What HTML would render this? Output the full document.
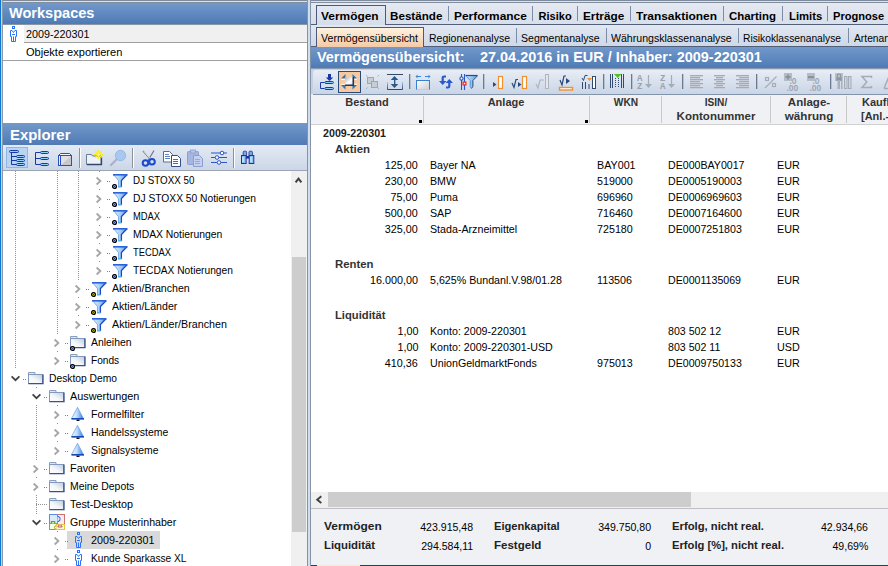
<!DOCTYPE html><html><head><meta charset="utf-8"><style>
body{margin:0;width:888px;height:566px;overflow:hidden;position:relative;background:#f0f0f0;font-family:"Liberation Sans",sans-serif}
.a{position:absolute}
.t{position:absolute;white-space:nowrap;line-height:1;transform-origin:0 0}
</style></head><body>
<div class="a" style="left:0px;top:0px;width:888px;height:1px;background:#7d8b9d"></div>
<div class="a" style="left:0px;top:1px;width:888px;height:1px;background:#dbe3ee"></div>
<div class="a" style="left:0px;top:2px;width:888px;height:1px;background:#818d9d"></div>
<div class="a" style="left:0px;top:0px;width:1px;height:566px;background:#0f78d6"></div>
<div class="a" style="left:1px;top:0px;width:1px;height:566px;background:#c9d2de"></div>
<div class="a" style="left:2px;top:0px;width:1px;height:566px;background:#8a98a8"></div>
<div class="a" style="left:3px;top:3px;width:304px;height:21px;background:linear-gradient(#7399cb,#4e7ab5)"></div>
<div class="a" style="left:3px;top:24px;width:304px;height:1px;background:#8a96a4"></div>
<div class="t" style="left:9px;top:5px;font-size:15px;font-weight:bold;color:#fff;transform:scaleX(0.970);">Workspaces</div>
<div class="a" style="left:3px;top:25px;width:304px;height:97px;background:#fff"></div>
<div class="a" style="left:24px;top:25px;width:283px;height:17px;background:#f0f0f0"></div>
<div class="a" style="left:24px;top:42px;width:283px;height:1px;background:#a0a0a0"></div>
<div class="a" style="left:3px;top:60px;width:304px;height:1px;background:#a0a0a0"></div>
<div class="t" style="left:26px;top:29px;font-size:11px;font-weight:normal;color:#000;transform:scaleX(0.979);">2009-220301</div>
<div class="t" style="left:26px;top:47px;font-size:11px;font-weight:normal;color:#000;transform:scaleX(1.003);">Objekte exportieren</div>
<svg class="a" style="left:10px;top:26px;" width="8" height="16" viewBox="0 0 8 16"><g fill="none" stroke="#2a72f8" stroke-width="1"><rect x="2.5" y="0.5" width="2" height="2"/><path d="M0.5 4.5H2L3.5 6.5L5 4.5H6.5V10.5H5.5V15.5H1.5V10.5H0.5Z"/><path d="M3.5 10.5V15.5M2 8.5H5"/></g></svg>
<div class="a" style="left:3px;top:122px;width:304px;height:1px;background:#fff"></div>
<div class="a" style="left:3px;top:123px;width:304px;height:22px;background:linear-gradient(#7399cb,#4e7ab5)"></div>
<div class="t" style="left:9.5px;top:127px;font-size:15px;font-weight:bold;color:#fff;transform:scaleX(0.993);">Explorer</div>
<div class="a" style="left:3px;top:145px;width:304px;height:25px;background:linear-gradient(#e3eaf4,#ccd6e6)"></div>
<div class="a" style="left:3px;top:170px;width:304px;height:1px;background:#9aa6b6"></div>
<div class="a" style="left:6px;top:147px;width:22px;height:21px;background:#b9d3f3;border:1px solid #8db6ea;box-sizing:border-box"></div>
<svg class="a" style="left:0;top:0" width="888" height="566"><path d="M11.5 152v12.5M11.5 156.5h5M11.5 160.5h5M11.5 164.5h5" stroke="#1838a8" stroke-width="1" fill="none"/><rect x="9.5" y="150.5" width="9" height="2" rx="1" fill="#8cd0fa" stroke="#1838a8" stroke-width="1"/><rect x="16.5" y="155.5" width="8" height="2" rx="1" fill="#8cd0fa" stroke="#1838a8" stroke-width="1"/><rect x="16.5" y="159.5" width="8" height="2" rx="1" fill="#8cd0fa" stroke="#1838a8" stroke-width="1"/><rect x="16.5" y="163.5" width="8" height="2" rx="1" fill="#8cd0fa" stroke="#1838a8" stroke-width="1"/><path d="M35.5 152.5v12M35.5 152.5h5M35.5 158.5h5M35.5 164.5h5" stroke="#1838a8" stroke-width="1" fill="none"/><rect x="40.5" y="151.5" width="8" height="2" rx="1" fill="#8cd0fa" stroke="#1838a8" stroke-width="1"/><rect x="40.5" y="157.5" width="8" height="2" rx="1" fill="#8cd0fa" stroke="#1838a8" stroke-width="1"/><rect x="40.5" y="163.5" width="8" height="2" rx="1" fill="#8cd0fa" stroke="#1838a8" stroke-width="1"/><path d="M58.5 155.5l2-2h9l2 2" fill="#f4f6fa" stroke="#2850c0"/><rect x="58.5" y="155.5" width="2" height="10" fill="#e8eef8" stroke="#2850c0"/><rect x="60.5" y="155.5" width="11" height="10" fill="#e0e0e4" stroke="#2850c0"/><path d="M61 165L71 156V165z" fill="#c8c8cc"/><rect x="79" y="148" width="1" height="20" fill="#8e9298"/><rect x="80" y="148" width="1" height="20" fill="#ffffff"/><rect x="132" y="148" width="1" height="20" fill="#8e9298"/><rect x="133" y="148" width="1" height="20" fill="#ffffff"/><rect x="233" y="148" width="1" height="20" fill="#8e9298"/><rect x="234" y="148" width="1" height="20" fill="#ffffff"/><path d="M86.5 154.5h5l1 1.5h8.5v8.5h-14.5z" fill="#eef2f8" stroke="#6a7c98"/><path d="M87 164.5h14.5V157" fill="none" stroke="#34486a" stroke-width="1.3"/><path d="M98.5 150v9M94 154.5h9M95.3 151.3l6.4 6.4M101.7 151.3l-6.4 6.4" stroke="#f4ec20" stroke-width="1.2"/><path d="M98.5 152.5v4M96.5 154.5h4" stroke="#f8f080" stroke-width="1"/><path d="M117 159l-6 6" stroke="#a8b2c4" stroke-width="2.2" stroke-linecap="round"/><circle cx="120.5" cy="155.5" r="5.2" fill="#a8c8f0" stroke="#98b8e8" stroke-width="1"/><path d="M143 151l8 9M154 150.5l-6 10" stroke="#707888" stroke-width="1.2" fill="none"/><path d="M144 151.5l7 8" stroke="#ffffff" stroke-width="0.8"/><circle cx="145.5" cy="163" r="2.8" fill="none" stroke="#1a4ad0" stroke-width="2"/><circle cx="152" cy="161.8" r="2.8" fill="none" stroke="#1a4ad0" stroke-width="2"/><path d="M163.5 151.5h6l3 3v7.5h-9z" fill="#fff" stroke="#5a6a88"/><path d="M165 154.5h4M165 156.5h5M165 158.5h5" stroke="#6080c0"/><path d="M171.5 155.5h6l3 3v8h-9z" fill="#fff" stroke="#34508a"/><path d="M173 159.5h5M173 161.5h5M173 163.5h5" stroke="#3a70d0"/><rect x="187.5" y="151.5" width="11" height="13" rx="1" fill="#a6b6e0" stroke="#8c9ed0"/><rect x="190.5" y="150" width="5" height="3" fill="#b8c6ea" stroke="#8c9ed0" stroke-width="0.8"/><path d="M193.5 155.5h6l3 3v8h-9z" fill="#c4d0ee" stroke="#8c9ed0"/><path d="M195 159.5h5M195 161.5h5M195 163.5h5" stroke="#98a8d8"/><path d="M211 153h16M211 157.5h16M211 162.5h16" stroke="#2a56c8" stroke-width="1.2"/><circle cx="222" cy="153" r="1.8" fill="#fff" stroke="#2a56c8"/><circle cx="217" cy="157.5" r="1.8" fill="#fff" stroke="#2a56c8"/><circle cx="219" cy="162.5" r="1.8" fill="#fff" stroke="#2a56c8"/><rect x="243.2" y="151.2" width="3.4" height="5" rx="1" fill="#78aee0" stroke="#2a3aa0" stroke-width="0.9"/><rect x="249" y="151.2" width="3.4" height="5" rx="1" fill="#78aee0" stroke="#2a3aa0" stroke-width="0.9"/><rect x="241.5" y="155.5" width="4.6" height="8" fill="#8cc4f0" stroke="#2030a0" stroke-width="1"/><rect x="249.2" y="155.5" width="4.6" height="8" fill="#8cc4f0" stroke="#2030a0" stroke-width="1"/><rect x="246" y="156" width="3.2" height="2.6" fill="#2030a0"/><path d="M243 157v5M251 157v5" stroke="#e8f6ff" stroke-width="1"/></svg>
<div class="a" style="left:3px;top:171px;width:288px;height:395px;background:#fff"></div>
<div class="a" style="left:291px;top:171px;width:16px;height:395px;background:#f0f0f0"></div>
<div class="a" style="left:292px;top:257px;width:14px;height:275px;background:#cdcdcd"></div>
<svg class="a" style="left:294px;top:176px;" width="9" height="8" viewBox="0 0 9 8"><path d="M1.6 6.3L4.5 2.6L7.4 6.3" fill="none" stroke="#404040" stroke-width="2"/></svg>
<div class="a" style="left:15px;top:171px;width:1px;height:198px;background:repeating-linear-gradient(#909090 0 1px,transparent 1px 2px)"></div>
<div class="a" style="left:57px;top:171px;width:1px;height:187px;background:repeating-linear-gradient(#909090 0 1px,transparent 1px 2px)"></div>
<div class="a" style="left:78px;top:171px;width:1px;height:151px;background:repeating-linear-gradient(#909090 0 1px,transparent 1px 2px)"></div>
<div class="a" style="left:99px;top:171px;width:1px;height:97px;background:repeating-linear-gradient(#909090 0 1px,transparent 1px 2px)"></div>
<div class="a" style="left:36px;top:387px;width:1px;height:133px;background:repeating-linear-gradient(#909090 0 1px,transparent 1px 2px)"></div>
<div class="a" style="left:57px;top:405px;width:1px;height:43px;background:repeating-linear-gradient(#909090 0 1px,transparent 1px 2px)"></div>
<div class="a" style="left:57px;top:531px;width:1px;height:35px;background:repeating-linear-gradient(#909090 0 1px,transparent 1px 2px)"></div>
<div class="a" style="left:95px;top:173px;width:9px;height:15px;background:#fff"></div>
<svg class="a" style="left:95px;top:176px;" width="8" height="10" viewBox="0 0 8 10"><path d="M1.6 1.5L5.4 5L1.6 8.5" fill="none" stroke="#a6a6a6" stroke-width="1.8"/></svg>
<div class="a" style="left:107px;top:181px;width:1px;height:1px;background:#808080"></div>
<div class="a" style="left:109px;top:181px;width:1px;height:1px;background:#808080"></div>
<svg class="a" style="left:113px;top:174px;" width="15" height="14" viewBox="0 0 15 14"><defs><linearGradient id="fg" x1="0" x2="1"><stop offset="0" stop-color="#e4f0fc"/><stop offset="0.5" stop-color="#a8d0f8"/><stop offset="1" stop-color="#4e90e8"/></linearGradient></defs><path d="M0.5 0.5H14L9 6.5V13H5V6.5z" fill="url(#fg)"/><path d="M0.5 0.5L5.5 6.5V13" fill="none" stroke="#80aee8" stroke-width="1"/><path d="M14 0.8L8.4 6.5V13" fill="none" stroke="#1a4cc8" stroke-width="1.3"/><rect x="0" y="0" width="14.5" height="1.6" fill="#2a62d8"/><rect x="5" y="12" width="3.5" height="1.5" fill="#5ab0e8"/></svg>
<svg class="a" style="left:112px;top:184px;" width="6" height="6" viewBox="0 0 6 6"><circle cx="2.5" cy="2.5" r="1.9" fill="#f4e800" stroke="#000" stroke-width="1.3"/><rect x="2" y="2" width="1" height="1" fill="#2040a0"/></svg>
<div class="t" style="left:133px;top:175px;font-size:11px;font-weight:normal;color:#000;transform:scaleX(0.891);">DJ STOXX 50</div>
<div class="a" style="left:95px;top:191px;width:9px;height:15px;background:#fff"></div>
<svg class="a" style="left:95px;top:194px;" width="8" height="10" viewBox="0 0 8 10"><path d="M1.6 1.5L5.4 5L1.6 8.5" fill="none" stroke="#a6a6a6" stroke-width="1.8"/></svg>
<div class="a" style="left:107px;top:199px;width:1px;height:1px;background:#808080"></div>
<div class="a" style="left:109px;top:199px;width:1px;height:1px;background:#808080"></div>
<svg class="a" style="left:113px;top:192px;" width="15" height="14" viewBox="0 0 15 14"><defs><linearGradient id="fg" x1="0" x2="1"><stop offset="0" stop-color="#e4f0fc"/><stop offset="0.5" stop-color="#a8d0f8"/><stop offset="1" stop-color="#4e90e8"/></linearGradient></defs><path d="M0.5 0.5H14L9 6.5V13H5V6.5z" fill="url(#fg)"/><path d="M0.5 0.5L5.5 6.5V13" fill="none" stroke="#80aee8" stroke-width="1"/><path d="M14 0.8L8.4 6.5V13" fill="none" stroke="#1a4cc8" stroke-width="1.3"/><rect x="0" y="0" width="14.5" height="1.6" fill="#2a62d8"/><rect x="5" y="12" width="3.5" height="1.5" fill="#5ab0e8"/></svg>
<svg class="a" style="left:112px;top:202px;" width="6" height="6" viewBox="0 0 6 6"><circle cx="2.5" cy="2.5" r="1.9" fill="#f4e800" stroke="#000" stroke-width="1.3"/><rect x="2" y="2" width="1" height="1" fill="#2040a0"/></svg>
<div class="t" style="left:133px;top:193px;font-size:11px;font-weight:normal;color:#000;transform:scaleX(0.933);">DJ STOXX 50 Notierungen</div>
<div class="a" style="left:95px;top:209px;width:9px;height:15px;background:#fff"></div>
<svg class="a" style="left:95px;top:212px;" width="8" height="10" viewBox="0 0 8 10"><path d="M1.6 1.5L5.4 5L1.6 8.5" fill="none" stroke="#a6a6a6" stroke-width="1.8"/></svg>
<div class="a" style="left:107px;top:217px;width:1px;height:1px;background:#808080"></div>
<div class="a" style="left:109px;top:217px;width:1px;height:1px;background:#808080"></div>
<svg class="a" style="left:113px;top:210px;" width="15" height="14" viewBox="0 0 15 14"><defs><linearGradient id="fg" x1="0" x2="1"><stop offset="0" stop-color="#e4f0fc"/><stop offset="0.5" stop-color="#a8d0f8"/><stop offset="1" stop-color="#4e90e8"/></linearGradient></defs><path d="M0.5 0.5H14L9 6.5V13H5V6.5z" fill="url(#fg)"/><path d="M0.5 0.5L5.5 6.5V13" fill="none" stroke="#80aee8" stroke-width="1"/><path d="M14 0.8L8.4 6.5V13" fill="none" stroke="#1a4cc8" stroke-width="1.3"/><rect x="0" y="0" width="14.5" height="1.6" fill="#2a62d8"/><rect x="5" y="12" width="3.5" height="1.5" fill="#5ab0e8"/></svg>
<svg class="a" style="left:112px;top:220px;" width="6" height="6" viewBox="0 0 6 6"><circle cx="2.5" cy="2.5" r="1.9" fill="#f4e800" stroke="#000" stroke-width="1.3"/><rect x="2" y="2" width="1" height="1" fill="#2040a0"/></svg>
<div class="t" style="left:133px;top:211px;font-size:11px;font-weight:normal;color:#000;transform:scaleX(0.853);">MDAX</div>
<div class="a" style="left:95px;top:227px;width:9px;height:15px;background:#fff"></div>
<svg class="a" style="left:95px;top:230px;" width="8" height="10" viewBox="0 0 8 10"><path d="M1.6 1.5L5.4 5L1.6 8.5" fill="none" stroke="#a6a6a6" stroke-width="1.8"/></svg>
<div class="a" style="left:107px;top:235px;width:1px;height:1px;background:#808080"></div>
<div class="a" style="left:109px;top:235px;width:1px;height:1px;background:#808080"></div>
<svg class="a" style="left:113px;top:228px;" width="15" height="14" viewBox="0 0 15 14"><defs><linearGradient id="fg" x1="0" x2="1"><stop offset="0" stop-color="#e4f0fc"/><stop offset="0.5" stop-color="#a8d0f8"/><stop offset="1" stop-color="#4e90e8"/></linearGradient></defs><path d="M0.5 0.5H14L9 6.5V13H5V6.5z" fill="url(#fg)"/><path d="M0.5 0.5L5.5 6.5V13" fill="none" stroke="#80aee8" stroke-width="1"/><path d="M14 0.8L8.4 6.5V13" fill="none" stroke="#1a4cc8" stroke-width="1.3"/><rect x="0" y="0" width="14.5" height="1.6" fill="#2a62d8"/><rect x="5" y="12" width="3.5" height="1.5" fill="#5ab0e8"/></svg>
<svg class="a" style="left:112px;top:238px;" width="6" height="6" viewBox="0 0 6 6"><circle cx="2.5" cy="2.5" r="1.9" fill="#f4e800" stroke="#000" stroke-width="1.3"/><rect x="2" y="2" width="1" height="1" fill="#2040a0"/></svg>
<div class="t" style="left:133px;top:229px;font-size:11px;font-weight:normal;color:#000;transform:scaleX(0.943);">MDAX Notierungen</div>
<div class="a" style="left:95px;top:245px;width:9px;height:15px;background:#fff"></div>
<svg class="a" style="left:95px;top:248px;" width="8" height="10" viewBox="0 0 8 10"><path d="M1.6 1.5L5.4 5L1.6 8.5" fill="none" stroke="#a6a6a6" stroke-width="1.8"/></svg>
<div class="a" style="left:107px;top:253px;width:1px;height:1px;background:#808080"></div>
<div class="a" style="left:109px;top:253px;width:1px;height:1px;background:#808080"></div>
<svg class="a" style="left:113px;top:246px;" width="15" height="14" viewBox="0 0 15 14"><defs><linearGradient id="fg" x1="0" x2="1"><stop offset="0" stop-color="#e4f0fc"/><stop offset="0.5" stop-color="#a8d0f8"/><stop offset="1" stop-color="#4e90e8"/></linearGradient></defs><path d="M0.5 0.5H14L9 6.5V13H5V6.5z" fill="url(#fg)"/><path d="M0.5 0.5L5.5 6.5V13" fill="none" stroke="#80aee8" stroke-width="1"/><path d="M14 0.8L8.4 6.5V13" fill="none" stroke="#1a4cc8" stroke-width="1.3"/><rect x="0" y="0" width="14.5" height="1.6" fill="#2a62d8"/><rect x="5" y="12" width="3.5" height="1.5" fill="#5ab0e8"/></svg>
<svg class="a" style="left:112px;top:256px;" width="6" height="6" viewBox="0 0 6 6"><circle cx="2.5" cy="2.5" r="1.9" fill="#f4e800" stroke="#000" stroke-width="1.3"/><rect x="2" y="2" width="1" height="1" fill="#2040a0"/></svg>
<div class="t" style="left:133px;top:247px;font-size:11px;font-weight:normal;color:#000;transform:scaleX(0.854);">TECDAX</div>
<div class="a" style="left:95px;top:263px;width:9px;height:15px;background:#fff"></div>
<svg class="a" style="left:95px;top:266px;" width="8" height="10" viewBox="0 0 8 10"><path d="M1.6 1.5L5.4 5L1.6 8.5" fill="none" stroke="#a6a6a6" stroke-width="1.8"/></svg>
<div class="a" style="left:107px;top:271px;width:1px;height:1px;background:#808080"></div>
<div class="a" style="left:109px;top:271px;width:1px;height:1px;background:#808080"></div>
<svg class="a" style="left:113px;top:264px;" width="15" height="14" viewBox="0 0 15 14"><defs><linearGradient id="fg" x1="0" x2="1"><stop offset="0" stop-color="#e4f0fc"/><stop offset="0.5" stop-color="#a8d0f8"/><stop offset="1" stop-color="#4e90e8"/></linearGradient></defs><path d="M0.5 0.5H14L9 6.5V13H5V6.5z" fill="url(#fg)"/><path d="M0.5 0.5L5.5 6.5V13" fill="none" stroke="#80aee8" stroke-width="1"/><path d="M14 0.8L8.4 6.5V13" fill="none" stroke="#1a4cc8" stroke-width="1.3"/><rect x="0" y="0" width="14.5" height="1.6" fill="#2a62d8"/><rect x="5" y="12" width="3.5" height="1.5" fill="#5ab0e8"/></svg>
<svg class="a" style="left:112px;top:274px;" width="6" height="6" viewBox="0 0 6 6"><circle cx="2.5" cy="2.5" r="1.9" fill="#f4e800" stroke="#000" stroke-width="1.3"/><rect x="2" y="2" width="1" height="1" fill="#2040a0"/></svg>
<div class="t" style="left:133px;top:265px;font-size:11px;font-weight:normal;color:#000;transform:scaleX(0.928);">TECDAX Notierungen</div>
<div class="a" style="left:74px;top:281px;width:9px;height:15px;background:#fff"></div>
<svg class="a" style="left:74px;top:284px;" width="8" height="10" viewBox="0 0 8 10"><path d="M1.6 1.5L5.4 5L1.6 8.5" fill="none" stroke="#a6a6a6" stroke-width="1.8"/></svg>
<div class="a" style="left:86px;top:289px;width:1px;height:1px;background:#808080"></div>
<div class="a" style="left:88px;top:289px;width:1px;height:1px;background:#808080"></div>
<svg class="a" style="left:92px;top:282px;" width="15" height="14" viewBox="0 0 15 14"><defs><linearGradient id="fg" x1="0" x2="1"><stop offset="0" stop-color="#e4f0fc"/><stop offset="0.5" stop-color="#a8d0f8"/><stop offset="1" stop-color="#4e90e8"/></linearGradient></defs><path d="M0.5 0.5H14L9 6.5V13H5V6.5z" fill="url(#fg)"/><path d="M0.5 0.5L5.5 6.5V13" fill="none" stroke="#80aee8" stroke-width="1"/><path d="M14 0.8L8.4 6.5V13" fill="none" stroke="#1a4cc8" stroke-width="1.3"/><rect x="0" y="0" width="14.5" height="1.6" fill="#2a62d8"/><rect x="5" y="12" width="3.5" height="1.5" fill="#5ab0e8"/></svg>
<svg class="a" style="left:91px;top:292px;" width="6" height="6" viewBox="0 0 6 6"><circle cx="2.5" cy="2.5" r="1.9" fill="#f4e800" stroke="#000" stroke-width="1.3"/><rect x="2" y="2" width="1" height="1" fill="#2040a0"/></svg>
<div class="t" style="left:112px;top:283px;font-size:11px;font-weight:normal;color:#000;transform:scaleX(0.963);">Aktien/Branchen</div>
<div class="a" style="left:74px;top:299px;width:9px;height:15px;background:#fff"></div>
<svg class="a" style="left:74px;top:302px;" width="8" height="10" viewBox="0 0 8 10"><path d="M1.6 1.5L5.4 5L1.6 8.5" fill="none" stroke="#a6a6a6" stroke-width="1.8"/></svg>
<div class="a" style="left:86px;top:307px;width:1px;height:1px;background:#808080"></div>
<div class="a" style="left:88px;top:307px;width:1px;height:1px;background:#808080"></div>
<svg class="a" style="left:92px;top:300px;" width="15" height="14" viewBox="0 0 15 14"><defs><linearGradient id="fg" x1="0" x2="1"><stop offset="0" stop-color="#e4f0fc"/><stop offset="0.5" stop-color="#a8d0f8"/><stop offset="1" stop-color="#4e90e8"/></linearGradient></defs><path d="M0.5 0.5H14L9 6.5V13H5V6.5z" fill="url(#fg)"/><path d="M0.5 0.5L5.5 6.5V13" fill="none" stroke="#80aee8" stroke-width="1"/><path d="M14 0.8L8.4 6.5V13" fill="none" stroke="#1a4cc8" stroke-width="1.3"/><rect x="0" y="0" width="14.5" height="1.6" fill="#2a62d8"/><rect x="5" y="12" width="3.5" height="1.5" fill="#5ab0e8"/></svg>
<svg class="a" style="left:91px;top:310px;" width="6" height="6" viewBox="0 0 6 6"><circle cx="2.5" cy="2.5" r="1.9" fill="#f4e800" stroke="#000" stroke-width="1.3"/><rect x="2" y="2" width="1" height="1" fill="#2040a0"/></svg>
<div class="t" style="left:112px;top:301px;font-size:11px;font-weight:normal;color:#000;transform:scaleX(0.962);">Aktien/Länder</div>
<div class="a" style="left:74px;top:317px;width:9px;height:15px;background:#fff"></div>
<svg class="a" style="left:74px;top:320px;" width="8" height="10" viewBox="0 0 8 10"><path d="M1.6 1.5L5.4 5L1.6 8.5" fill="none" stroke="#a6a6a6" stroke-width="1.8"/></svg>
<div class="a" style="left:86px;top:325px;width:1px;height:1px;background:#808080"></div>
<div class="a" style="left:88px;top:325px;width:1px;height:1px;background:#808080"></div>
<svg class="a" style="left:92px;top:318px;" width="15" height="14" viewBox="0 0 15 14"><defs><linearGradient id="fg" x1="0" x2="1"><stop offset="0" stop-color="#e4f0fc"/><stop offset="0.5" stop-color="#a8d0f8"/><stop offset="1" stop-color="#4e90e8"/></linearGradient></defs><path d="M0.5 0.5H14L9 6.5V13H5V6.5z" fill="url(#fg)"/><path d="M0.5 0.5L5.5 6.5V13" fill="none" stroke="#80aee8" stroke-width="1"/><path d="M14 0.8L8.4 6.5V13" fill="none" stroke="#1a4cc8" stroke-width="1.3"/><rect x="0" y="0" width="14.5" height="1.6" fill="#2a62d8"/><rect x="5" y="12" width="3.5" height="1.5" fill="#5ab0e8"/></svg>
<svg class="a" style="left:91px;top:328px;" width="6" height="6" viewBox="0 0 6 6"><circle cx="2.5" cy="2.5" r="1.9" fill="#f4e800" stroke="#000" stroke-width="1.3"/><rect x="2" y="2" width="1" height="1" fill="#2040a0"/></svg>
<div class="t" style="left:112px;top:319px;font-size:11px;font-weight:normal;color:#000;transform:scaleX(0.973);">Aktien/Länder/Branchen</div>
<div class="a" style="left:53px;top:335px;width:9px;height:15px;background:#fff"></div>
<svg class="a" style="left:53px;top:338px;" width="8" height="10" viewBox="0 0 8 10"><path d="M1.6 1.5L5.4 5L1.6 8.5" fill="none" stroke="#a6a6a6" stroke-width="1.8"/></svg>
<div class="a" style="left:65px;top:343px;width:1px;height:1px;background:#808080"></div>
<div class="a" style="left:67px;top:343px;width:1px;height:1px;background:#808080"></div>
<svg class="a" style="left:70px;top:336px;" width="16" height="13" viewBox="0 0 16 13"><defs><linearGradient id="fo" x1="0" y1="1" x2="1" y2="0"><stop offset="0" stop-color="#ffffff"/><stop offset="0.45" stop-color="#f4f6fa"/><stop offset="1" stop-color="#bccadc"/></linearGradient></defs><path d="M0.5 2.5V0.5H7V2" fill="#dfe6f0" stroke="#8aa0c0"/><rect x="0.5" y="2.5" width="14" height="9" fill="url(#fo)" stroke="#8298bc"/><path d="M0.5 11.6H15V2.5" fill="none" stroke="#3a5286" stroke-width="1.3"/></svg>
<svg class="a" style="left:70px;top:346px;" width="6" height="6" viewBox="0 0 6 6"><circle cx="2.5" cy="2.5" r="1.9" fill="#f4e800" stroke="#000" stroke-width="1.3"/><rect x="2" y="2" width="1" height="1" fill="#2040a0"/></svg>
<div class="t" style="left:91px;top:337px;font-size:11px;font-weight:normal;color:#000;transform:scaleX(0.946);">Anleihen</div>
<div class="a" style="left:53px;top:353px;width:9px;height:15px;background:#fff"></div>
<svg class="a" style="left:53px;top:356px;" width="8" height="10" viewBox="0 0 8 10"><path d="M1.6 1.5L5.4 5L1.6 8.5" fill="none" stroke="#a6a6a6" stroke-width="1.8"/></svg>
<div class="a" style="left:65px;top:361px;width:1px;height:1px;background:#808080"></div>
<div class="a" style="left:67px;top:361px;width:1px;height:1px;background:#808080"></div>
<svg class="a" style="left:70px;top:354px;" width="16" height="13" viewBox="0 0 16 13"><defs><linearGradient id="fo" x1="0" y1="1" x2="1" y2="0"><stop offset="0" stop-color="#ffffff"/><stop offset="0.45" stop-color="#f4f6fa"/><stop offset="1" stop-color="#bccadc"/></linearGradient></defs><path d="M0.5 2.5V0.5H7V2" fill="#dfe6f0" stroke="#8aa0c0"/><rect x="0.5" y="2.5" width="14" height="9" fill="url(#fo)" stroke="#8298bc"/><path d="M0.5 11.6H15V2.5" fill="none" stroke="#3a5286" stroke-width="1.3"/></svg>
<svg class="a" style="left:70px;top:364px;" width="6" height="6" viewBox="0 0 6 6"><circle cx="2.5" cy="2.5" r="1.9" fill="#f4e800" stroke="#000" stroke-width="1.3"/><rect x="2" y="2" width="1" height="1" fill="#2040a0"/></svg>
<div class="t" style="left:91px;top:355px;font-size:11px;font-weight:normal;color:#000;transform:scaleX(0.922);">Fonds</div>
<div class="a" style="left:10px;top:371px;width:11px;height:15px;background:#fff"></div>
<svg class="a" style="left:10px;top:375px;" width="11" height="8" viewBox="0 0 11 8"><path d="M1.6 1.4L5.5 5.2L9.4 1.4" fill="none" stroke="#404040" stroke-width="1.7"/></svg>
<div class="a" style="left:23px;top:379px;width:1px;height:1px;background:#808080"></div>
<div class="a" style="left:25px;top:379px;width:1px;height:1px;background:#808080"></div>
<svg class="a" style="left:28px;top:372px;" width="16" height="13" viewBox="0 0 16 13"><defs><linearGradient id="fo" x1="0" y1="1" x2="1" y2="0"><stop offset="0" stop-color="#ffffff"/><stop offset="0.45" stop-color="#f4f6fa"/><stop offset="1" stop-color="#bccadc"/></linearGradient></defs><path d="M0.5 2.5V0.5H7V2" fill="#dfe6f0" stroke="#8aa0c0"/><rect x="0.5" y="2.5" width="14" height="9" fill="url(#fo)" stroke="#8298bc"/><path d="M0.5 11.6H15V2.5" fill="none" stroke="#3a5286" stroke-width="1.3"/></svg>
<div class="t" style="left:49px;top:373px;font-size:11px;font-weight:normal;color:#000;transform:scaleX(0.935);">Desktop Demo</div>
<div class="a" style="left:31px;top:389px;width:11px;height:15px;background:#fff"></div>
<svg class="a" style="left:31px;top:393px;" width="11" height="8" viewBox="0 0 11 8"><path d="M1.6 1.4L5.5 5.2L9.4 1.4" fill="none" stroke="#404040" stroke-width="1.7"/></svg>
<div class="a" style="left:44px;top:397px;width:1px;height:1px;background:#808080"></div>
<div class="a" style="left:46px;top:397px;width:1px;height:1px;background:#808080"></div>
<svg class="a" style="left:49px;top:390px;" width="16" height="13" viewBox="0 0 16 13"><defs><linearGradient id="fo" x1="0" y1="1" x2="1" y2="0"><stop offset="0" stop-color="#ffffff"/><stop offset="0.45" stop-color="#f4f6fa"/><stop offset="1" stop-color="#bccadc"/></linearGradient></defs><path d="M0.5 2.5V0.5H7V2" fill="#dfe6f0" stroke="#8aa0c0"/><rect x="0.5" y="2.5" width="14" height="9" fill="url(#fo)" stroke="#8298bc"/><path d="M0.5 11.6H15V2.5" fill="none" stroke="#3a5286" stroke-width="1.3"/></svg>
<div class="t" style="left:70px;top:391px;font-size:11px;font-weight:normal;color:#000;transform:scaleX(0.985);">Auswertungen</div>
<div class="a" style="left:53px;top:407px;width:9px;height:15px;background:#fff"></div>
<svg class="a" style="left:53px;top:410px;" width="8" height="10" viewBox="0 0 8 10"><path d="M1.6 1.5L5.4 5L1.6 8.5" fill="none" stroke="#a6a6a6" stroke-width="1.8"/></svg>
<div class="a" style="left:65px;top:415px;width:1px;height:1px;background:#808080"></div>
<div class="a" style="left:67px;top:415px;width:1px;height:1px;background:#808080"></div>
<svg class="a" style="left:71px;top:407px;" width="14" height="15" viewBox="0 0 14 15"><defs><linearGradient id="be" x1="0" x2="1"><stop offset="0" stop-color="#f4f9ff"/><stop offset="0.45" stop-color="#c0defc"/><stop offset="0.75" stop-color="#6aaaf0"/><stop offset="1" stop-color="#2a78e0"/></linearGradient></defs><path d="M6.5 0.3L12.6 11.8H0.4z" fill="url(#be)" stroke="#6a9ce0" stroke-width="0.7"/><rect x="0.5" y="11" width="12.5" height="1.6" fill="#1848c0"/><rect x="5.5" y="12.6" width="3" height="1.4" fill="#101010"/></svg>
<div class="t" style="left:91px;top:409px;font-size:11px;font-weight:normal;color:#000;transform:scaleX(0.967);">Formelfilter</div>
<div class="a" style="left:53px;top:425px;width:9px;height:15px;background:#fff"></div>
<svg class="a" style="left:53px;top:428px;" width="8" height="10" viewBox="0 0 8 10"><path d="M1.6 1.5L5.4 5L1.6 8.5" fill="none" stroke="#a6a6a6" stroke-width="1.8"/></svg>
<div class="a" style="left:65px;top:433px;width:1px;height:1px;background:#808080"></div>
<div class="a" style="left:67px;top:433px;width:1px;height:1px;background:#808080"></div>
<svg class="a" style="left:71px;top:425px;" width="14" height="15" viewBox="0 0 14 15"><defs><linearGradient id="be" x1="0" x2="1"><stop offset="0" stop-color="#f4f9ff"/><stop offset="0.45" stop-color="#c0defc"/><stop offset="0.75" stop-color="#6aaaf0"/><stop offset="1" stop-color="#2a78e0"/></linearGradient></defs><path d="M6.5 0.3L12.6 11.8H0.4z" fill="url(#be)" stroke="#6a9ce0" stroke-width="0.7"/><rect x="0.5" y="11" width="12.5" height="1.6" fill="#1848c0"/><rect x="5.5" y="12.6" width="3" height="1.4" fill="#101010"/></svg>
<div class="t" style="left:91px;top:427px;font-size:11px;font-weight:normal;color:#000;transform:scaleX(0.951);">Handelssysteme</div>
<div class="a" style="left:53px;top:443px;width:9px;height:15px;background:#fff"></div>
<svg class="a" style="left:53px;top:446px;" width="8" height="10" viewBox="0 0 8 10"><path d="M1.6 1.5L5.4 5L1.6 8.5" fill="none" stroke="#a6a6a6" stroke-width="1.8"/></svg>
<div class="a" style="left:65px;top:451px;width:1px;height:1px;background:#808080"></div>
<div class="a" style="left:67px;top:451px;width:1px;height:1px;background:#808080"></div>
<svg class="a" style="left:71px;top:443px;" width="14" height="15" viewBox="0 0 14 15"><defs><linearGradient id="be" x1="0" x2="1"><stop offset="0" stop-color="#f4f9ff"/><stop offset="0.45" stop-color="#c0defc"/><stop offset="0.75" stop-color="#6aaaf0"/><stop offset="1" stop-color="#2a78e0"/></linearGradient></defs><path d="M6.5 0.3L12.6 11.8H0.4z" fill="url(#be)" stroke="#6a9ce0" stroke-width="0.7"/><rect x="0.5" y="11" width="12.5" height="1.6" fill="#1848c0"/><rect x="5.5" y="12.6" width="3" height="1.4" fill="#101010"/></svg>
<div class="t" style="left:91px;top:445px;font-size:11px;font-weight:normal;color:#000;transform:scaleX(0.944);">Signalsysteme</div>
<div class="a" style="left:32px;top:461px;width:9px;height:15px;background:#fff"></div>
<svg class="a" style="left:32px;top:464px;" width="8" height="10" viewBox="0 0 8 10"><path d="M1.6 1.5L5.4 5L1.6 8.5" fill="none" stroke="#a6a6a6" stroke-width="1.8"/></svg>
<div class="a" style="left:44px;top:469px;width:1px;height:1px;background:#808080"></div>
<div class="a" style="left:46px;top:469px;width:1px;height:1px;background:#808080"></div>
<svg class="a" style="left:49px;top:462px;" width="16" height="13" viewBox="0 0 16 13"><defs><linearGradient id="fo" x1="0" y1="1" x2="1" y2="0"><stop offset="0" stop-color="#ffffff"/><stop offset="0.45" stop-color="#f4f6fa"/><stop offset="1" stop-color="#bccadc"/></linearGradient></defs><path d="M0.5 2.5V0.5H7V2" fill="#dfe6f0" stroke="#8aa0c0"/><rect x="0.5" y="2.5" width="14" height="9" fill="url(#fo)" stroke="#8298bc"/><path d="M0.5 11.6H15V2.5" fill="none" stroke="#3a5286" stroke-width="1.3"/></svg>
<div class="t" style="left:70px;top:463px;font-size:11px;font-weight:normal;color:#000;transform:scaleX(0.986);">Favoriten</div>
<div class="a" style="left:32px;top:479px;width:9px;height:15px;background:#fff"></div>
<svg class="a" style="left:32px;top:482px;" width="8" height="10" viewBox="0 0 8 10"><path d="M1.6 1.5L5.4 5L1.6 8.5" fill="none" stroke="#a6a6a6" stroke-width="1.8"/></svg>
<div class="a" style="left:44px;top:487px;width:1px;height:1px;background:#808080"></div>
<div class="a" style="left:46px;top:487px;width:1px;height:1px;background:#808080"></div>
<svg class="a" style="left:49px;top:480px;" width="16" height="13" viewBox="0 0 16 13"><defs><linearGradient id="fo" x1="0" y1="1" x2="1" y2="0"><stop offset="0" stop-color="#ffffff"/><stop offset="0.45" stop-color="#f4f6fa"/><stop offset="1" stop-color="#bccadc"/></linearGradient></defs><path d="M0.5 2.5V0.5H7V2" fill="#dfe6f0" stroke="#8aa0c0"/><rect x="0.5" y="2.5" width="14" height="9" fill="url(#fo)" stroke="#8298bc"/><path d="M0.5 11.6H15V2.5" fill="none" stroke="#3a5286" stroke-width="1.3"/></svg>
<div class="t" style="left:70px;top:481px;font-size:11px;font-weight:normal;color:#000;transform:scaleX(0.947);">Meine Depots</div>
<div class="a" style="left:36px;top:504px;width:12px;height:1px;background:repeating-linear-gradient(90deg,#909090 0 1px,transparent 1px 2px)"></div>
<svg class="a" style="left:49px;top:498px;" width="16" height="13" viewBox="0 0 16 13"><defs><linearGradient id="fo" x1="0" y1="1" x2="1" y2="0"><stop offset="0" stop-color="#ffffff"/><stop offset="0.45" stop-color="#f4f6fa"/><stop offset="1" stop-color="#bccadc"/></linearGradient></defs><path d="M0.5 2.5V0.5H7V2" fill="#dfe6f0" stroke="#8aa0c0"/><rect x="0.5" y="2.5" width="14" height="9" fill="url(#fo)" stroke="#8298bc"/><path d="M0.5 11.6H15V2.5" fill="none" stroke="#3a5286" stroke-width="1.3"/></svg>
<div class="t" style="left:70px;top:499px;font-size:11px;font-weight:normal;color:#000;transform:scaleX(0.980);">Test-Desktop</div>
<div class="a" style="left:31px;top:515px;width:11px;height:15px;background:#fff"></div>
<svg class="a" style="left:31px;top:519px;" width="11" height="8" viewBox="0 0 11 8"><path d="M1.6 1.4L5.5 5.2L9.4 1.4" fill="none" stroke="#404040" stroke-width="1.7"/></svg>
<div class="a" style="left:44px;top:523px;width:1px;height:1px;background:#808080"></div>
<div class="a" style="left:46px;top:523px;width:1px;height:1px;background:#808080"></div>
<svg class="a" style="left:49px;top:514px;" width="17" height="17" viewBox="0 0 17 17"><rect x="0.5" y="0.5" width="8" height="9" fill="#dce8fb" stroke="#5a90e0"/><rect x="8.5" y="0.5" width="7" height="10" fill="#fdeaea" stroke="#d07070"/><rect x="0.5" y="9.5" width="7" height="6" fill="#f2fde8" stroke="#60c020"/><rect x="7.5" y="10.5" width="8" height="5" fill="#fdf6d0" stroke="#e0c840"/><path d="M8.5 2.5h1.5v1h1v3h-1v1h-1.5" fill="#dce8fb" stroke="#3a70e0"/><path d="M10 10.5v1.5h-1v1h4v-1h-1v-1.5" fill="#fdeaea" stroke="#c06060"/><path d="M3 9.5v-1h-1v-1h4v1h-1v1" fill="#f2fde8" stroke="#50b020"/><path d="M7.5 11.5h-1v1h-1v2h1v1h1" fill="#fdf6d0" stroke="#c8b030"/></svg>
<div class="t" style="left:70px;top:517px;font-size:11px;font-weight:normal;color:#000;transform:scaleX(0.966);">Gruppe Musterinhaber</div>
<div class="a" style="left:67px;top:531px;width:93px;height:18px;background:#d9d9d9"></div>
<div class="a" style="left:53px;top:533px;width:9px;height:15px;background:#fff"></div>
<svg class="a" style="left:53px;top:536px;" width="8" height="10" viewBox="0 0 8 10"><path d="M1.6 1.5L5.4 5L1.6 8.5" fill="none" stroke="#a6a6a6" stroke-width="1.8"/></svg>
<div class="a" style="left:65px;top:541px;width:1px;height:1px;background:#808080"></div>
<div class="a" style="left:67px;top:541px;width:1px;height:1px;background:#808080"></div>
<svg class="a" style="left:75px;top:532px;" width="8" height="16" viewBox="0 0 8 16"><g fill="none" stroke="#2a72f8" stroke-width="1"><rect x="2.5" y="0.5" width="2" height="2"/><path d="M0.5 4.5H2L3.5 6.5L5 4.5H6.5V10.5H5.5V15.5H1.5V10.5H0.5Z"/><path d="M3.5 10.5V15.5M2 8.5H5"/></g></svg>
<div class="t" style="left:91px;top:535px;font-size:11px;font-weight:normal;color:#000;transform:scaleX(0.979);">2009-220301</div>
<div class="a" style="left:53px;top:551px;width:9px;height:15px;background:#fff"></div>
<svg class="a" style="left:53px;top:554px;" width="8" height="10" viewBox="0 0 8 10"><path d="M1.6 1.5L5.4 5L1.6 8.5" fill="none" stroke="#a6a6a6" stroke-width="1.8"/></svg>
<div class="a" style="left:65px;top:559px;width:1px;height:1px;background:#808080"></div>
<div class="a" style="left:67px;top:559px;width:1px;height:1px;background:#808080"></div>
<svg class="a" style="left:75px;top:550px;" width="8" height="16" viewBox="0 0 8 16"><g fill="none" stroke="#2a72f8" stroke-width="1"><rect x="2.5" y="0.5" width="2" height="2"/><path d="M0.5 4.5H2L3.5 6.5L5 4.5H6.5V10.5H5.5V15.5H1.5V10.5H0.5Z"/><path d="M3.5 10.5V15.5M2 8.5H5"/></g></svg>
<div class="t" style="left:91px;top:553px;font-size:11px;font-weight:normal;color:#000;transform:scaleX(0.924);">Kunde Sparkasse XL</div>
<div class="a" style="left:307px;top:0px;width:1px;height:566px;background:#8494a8"></div>
<div class="a" style="left:308px;top:0px;width:2px;height:566px;background:#d3deec"></div>
<div class="a" style="left:310px;top:0px;width:1px;height:566px;background:#8494a8"></div>
<div class="a" style="left:311px;top:3px;width:577px;height:22px;background:linear-gradient(#e4e9f2,#d8dfea)"></div>
<div class="a" style="left:311px;top:24px;width:577px;height:1px;background:#50607a"></div>
<div class="a" style="left:311px;top:25px;width:577px;height:22px;background:linear-gradient(#e2e8f1,#cdd7e6)"></div>
<div class="a" style="left:311px;top:46px;width:577px;height:1px;background:#50607a"></div>
<div class="a" style="left:316px;top:5px;width:70px;height:20px;background:linear-gradient(#e2e8f2,#d5ddea);border:1px solid #4a5a78;border-bottom:none;box-sizing:border-box"></div>
<div class="a" style="left:316px;top:27px;width:108px;height:20px;background:linear-gradient(#fdf2e0,#f5caa6);border:1px solid #4a5a78;border-bottom:none;box-sizing:border-box"></div>
<div class="t" style="left:321px;top:11px;font-size:11px;font-weight:bold;color:#000;transform:scaleX(1.083);">Vermögen</div>
<div class="t" style="left:390.3px;top:11px;font-size:11px;font-weight:bold;color:#000;transform:scaleX(1.058);">Bestände</div>
<div class="t" style="left:454px;top:11px;font-size:11px;font-weight:bold;color:#000;transform:scaleX(1.083);">Performance</div>
<div class="t" style="left:538.6px;top:11px;font-size:11px;font-weight:bold;color:#000;transform:scaleX(1.000);">Risiko</div>
<div class="t" style="left:583.4px;top:11px;font-size:11px;font-weight:bold;color:#000;transform:scaleX(1.070);">Erträge</div>
<div class="t" style="left:636.3px;top:11px;font-size:11px;font-weight:bold;color:#000;transform:scaleX(1.086);">Transaktionen</div>
<div class="t" style="left:729.2px;top:11px;font-size:11px;font-weight:bold;color:#000;transform:scaleX(1.039);">Charting</div>
<div class="t" style="left:788.5px;top:11px;font-size:11px;font-weight:bold;color:#000;transform:scaleX(1.025);">Limits</div>
<div class="t" style="left:833.4px;top:11px;font-size:11px;font-weight:bold;color:#000;transform:scaleX(1.009);">Prognose</div>
<div class="a" style="left:448px;top:6px;width:1px;height:15px;background:#7c8ca4"></div>
<div class="a" style="left:532px;top:6px;width:1px;height:15px;background:#7c8ca4"></div>
<div class="a" style="left:577px;top:6px;width:1px;height:15px;background:#7c8ca4"></div>
<div class="a" style="left:630px;top:6px;width:1px;height:15px;background:#7c8ca4"></div>
<div class="a" style="left:723px;top:6px;width:1px;height:15px;background:#7c8ca4"></div>
<div class="a" style="left:782px;top:6px;width:1px;height:15px;background:#7c8ca4"></div>
<div class="a" style="left:827px;top:6px;width:1px;height:15px;background:#7c8ca4"></div>
<div class="t" style="left:321px;top:33px;font-size:11px;font-weight:normal;color:#000;transform:scaleX(0.967);">Vermögensübersicht</div>
<div class="t" style="left:429px;top:33px;font-size:11px;font-weight:normal;color:#000;transform:scaleX(0.953);">Regionenanalyse</div>
<div class="t" style="left:521.4px;top:33px;font-size:11px;font-weight:normal;color:#000;transform:scaleX(0.960);">Segmentanalyse</div>
<div class="t" style="left:611.3px;top:33px;font-size:11px;font-weight:normal;color:#000;transform:scaleX(0.962);">Währungsklassenanalyse</div>
<div class="t" style="left:743.4px;top:33px;font-size:11px;font-weight:normal;color:#000;transform:scaleX(0.932);">Risikoklassenanalyse</div>
<div class="t" style="left:854px;top:33px;font-size:11px;font-weight:normal;color:#000;transform:scaleX(0.935);">Artenanalyse</div>
<div class="a" style="left:516px;top:28px;width:1px;height:15px;background:#7c8ca4"></div>
<div class="a" style="left:606px;top:28px;width:1px;height:15px;background:#7c8ca4"></div>
<div class="a" style="left:738px;top:28px;width:1px;height:15px;background:#7c8ca4"></div>
<div class="a" style="left:848px;top:28px;width:1px;height:15px;background:#7c8ca4"></div>
<div class="a" style="left:311px;top:47px;width:577px;height:21px;background:linear-gradient(#7399cb,#4e7ab5)"></div>
<div class="t" style="left:317px;top:49px;font-size:15px;font-weight:bold;color:#fff;transform:scaleX(0.962);">Vermögensübersicht:</div>
<div class="t" style="left:479.5px;top:49px;font-size:15px;font-weight:bold;color:#fff;transform:scaleX(0.963);">27.04.2016 in EUR / Inhaber: 2009-220301</div>
<div class="a" style="left:311px;top:68px;width:577px;height:1px;background:#8a9ab0"></div>
<div class="a" style="left:311px;top:69px;width:577px;height:25px;background:#c4d1e5"></div>
<div class="a" style="left:313px;top:70px;width:575px;height:24px;background:linear-gradient(#e8edf5,#c9d5e6);border-radius:3px 0 0 0"></div>
<div class="a" style="left:313px;top:94px;width:575px;height:1px;background:#8393aa"></div>
<div class="a" style="left:338px;top:71px;width:23px;height:22px;background:#f8c8a0;border:1px solid #2a4a78;box-sizing:border-box"></div>
<svg class="a" style="left:0;top:0" width="888" height="566"><defs><linearGradient id="g6" x1="0" y1="0" x2="1" y2="1"><stop offset="0" stop-color="#fff"/><stop offset="1" stop-color="#c8ccd8"/></linearGradient><linearGradient id="g8" x1="0" x2="1"><stop offset="0" stop-color="#d0e6fa"/><stop offset="1" stop-color="#5aa0e8"/></linearGradient></defs><rect x="328" y="74" width="3" height="4" fill="#1838a8"/><path d="M325.8 77.5h7.4l-3.7 3.5z" fill="#1838a8"/><path d="M320.5 82.5v6M320.5 82.5h4M320.5 88.5h4" stroke="#1838a8" fill="none"/><rect x="324.8" y="81.5" width="8.6" height="2" rx="1" fill="#8cd0fa" stroke="#1838a8" stroke-width="1"/><rect x="324.8" y="87.5" width="8.6" height="2" rx="1" fill="#8cd0fa" stroke="#1838a8" stroke-width="1"/><path d="M345.5 74V78.5H341z M352.5 74V78.5H357z M345.5 89.5V85H341z M352.5 89.5V85H357z" fill="#2a7ab8"/><path d="M341 79.3h4.5M352.5 79.3h4.5M341 84.3h4.5M352.5 84.3h4.5" stroke="#fff" stroke-width="0.9"/><defs><linearGradient id="g2" x1="0" y1="0" x2="1" y2="1"><stop offset="0" stop-color="#a8b4c8"/><stop offset="0.6" stop-color="#ffffff"/><stop offset="1" stop-color="#d0d8e4"/></linearGradient></defs><rect x="345" y="77" width="8" height="8" fill="url(#g2)"/><path d="M345 85.3H353.3V77" stroke="#22365e" stroke-width="1.6" fill="none"/><rect x="367.5" y="77.5" width="6" height="6" fill="#c8ccd4" stroke="#a0a6b0"/><rect x="371.5" y="81.5" width="6" height="6" fill="#c8ccd4" stroke="#a0a6b0"/><path d="M366 75l1.5 1.5M379 75l-1.5 1.5M366 89l1.5-1.5M379 89l-1.5-1.5" stroke="#a8aeb8"/><defs><linearGradient id="g4" x1="0" y1="0" x2="0" y2="1"><stop offset="0" stop-color="#a8c8f0"/><stop offset="1" stop-color="#34486a"/></linearGradient></defs><path d="M387 74.5h16" stroke="#34486a" fill="none"/><path d="M387.5 82v7.5h15V82" stroke="url(#g4)" fill="none"/><path d="M394.5 76l-3.8 4h7.6z M394.5 88l-3.8-4h7.6z" fill="#2a5a8a"/><rect x="394" y="79.5" width="1.4" height="5" fill="#2a5a8a"/><rect x="409" y="74" width="1.3" height="15" fill="#6a7a90"/><rect x="483" y="74" width="1.3" height="15" fill="#6a7a90"/><rect x="603" y="74" width="1.3" height="15" fill="#6a7a90"/><rect x="631" y="74" width="1.3" height="15" fill="#6a7a90"/><rect x="682" y="74" width="1.3" height="15" fill="#6a7a90"/><rect x="756" y="74" width="1.3" height="15" fill="#6a7a90"/><rect x="830" y="74" width="1.3" height="15" fill="#6a7a90"/><path d="M416 76.5h5M425 76.5h5" stroke="#3a8ad8" stroke-width="1.2"/><path d="M415.5 76.5l2-2v4z M430.5 76.5l-2-2v4z" fill="#3a8ad8"/><rect x="416.5" y="80.5" width="13" height="9" fill="url(#g6)" stroke="#3a80d0"/><path d="M416.5 89.5h13" stroke="#c8ccd4"/><path d="M446 76.5h-2a1.3 1.3 0 0 0-1.3 1.3V81.5M446 87.5h2a1.3 1.3 0 0 0 1.3-1.3V82.5" stroke="#2a5ac8" stroke-width="2.2" fill="none"/><path d="M439 81h7.4l-3.7 4z M445.6 83h7.4l-3.7-4z" fill="#2a5ac8"/><path d="M461.5 74v16M464.5 74v16" stroke="#2a56c8" stroke-width="1.1"/><rect x="460" y="77" width="3" height="3" rx="1" fill="#fff" stroke="#2a56c8" stroke-width="1.1"/><rect x="463.1" y="82.1" width="2.8" height="2.8" fill="#fff" stroke="#f02010" stroke-width="1.2"/><path d="M465.5 75.5h12l-4.6 4.8v6.2l-1.5 2l-1.5-2v-6.2z" fill="url(#g8)"/><path d="M465.5 75.5h12" stroke="#2a4a7a" stroke-width="1.2"/><path d="M477.5 75.8l-4.6 4.7v6l-1.5 2" stroke="#2a4a7a" fill="none" stroke-width="1"/><path d="M466 76l4.2 4.5v6l1.3 2" stroke="#4a90d8" fill="none" stroke-width="0.9"/><path d="M493 82v5l3.5-2.5z" fill="#2a4a7a"/><rect x="498.5" y="76.5" width="4" height="12" fill="#fff" stroke="#f09030" stroke-width="1.2"/><path d="M512 83l2 4.5l2-8h2" stroke="#2a4a7a" stroke-width="1.2" fill="none"/><path d="M518 82v5l3.5-2.5z" fill="#2a4a7a"/><rect x="522.5" y="76.5" width="4" height="12" fill="#fff" stroke="#f09030" stroke-width="1.2"/><path d="M536 84l2 4l2-8h4" stroke="#b0b4bc" stroke-width="1.2" fill="none"/><rect x="545.5" y="74.5" width="3" height="14" fill="#e4e6ea" stroke="#b0b4bc"/><path d="M560 80l2 5l2-9h2" stroke="#2a4a7a" stroke-width="1.2" fill="none"/><path d="M566 78v6l4-3z" fill="#2a4a7a"/><rect x="559.5" y="87.5" width="13" height="2.5" fill="#fff" stroke="#f09030" stroke-width="1.4"/><path d="M582.5 82v7M585.5 82v7M589 84v5" stroke="#304a70" stroke-width="1"/><rect x="592.5" y="76.5" width="3" height="12" fill="#fff" stroke="#304a70"/><path d="M582 78l1.5 2.5l1.5-5h2.5" stroke="#2a4a7a" fill="none"/><path d="M587 78h5l-2.5 3z" fill="#f09030"/><path d="M610.5 74v14M612.5 74v14M621.5 74v14M623.5 74v14" stroke="#304a70" stroke-width="1"/><path d="M615.5 78v10M618.5 78v10" stroke="#304a70" stroke-width="1" stroke-dasharray="1 1"/><path d="M614 74h7.5l-3.75 4z" fill="#50c020"/><text x="637" y="81" font-family="Liberation Mono" font-weight="bold" font-size="9" fill="#9aa2ae">A</text><text x="637" y="88.5" font-family="Liberation Mono" font-weight="bold" font-size="9" fill="#9aa2ae">Z</text><path d="M648.5 75v11" stroke="#a4acb8" stroke-width="1.2"/><path d="M645 84h7l-3.5 4z" fill="#a4acb8"/><text x="660" y="81" font-family="Liberation Mono" font-weight="bold" font-size="9" fill="#9aa2ae">Z</text><text x="660" y="88.5" font-family="Liberation Mono" font-weight="bold" font-size="9" fill="#9aa2ae">A</text><path d="M671.5 75v11" stroke="#a4acb8" stroke-width="1.2"/><path d="M668 84h7l-3.5 4z" fill="#a4acb8"/><rect x="690" y="75" width="13" height="1" fill="#a4acb8"/><rect x="690" y="76" width="13" height="0.8" fill="#c4cad4"/><rect x="714.0" y="75" width="11" height="1" fill="#a4acb8"/><rect x="714.0" y="76" width="11" height="0.8" fill="#c4cad4"/><rect x="736" y="75" width="13" height="1" fill="#a4acb8"/><rect x="736" y="76" width="13" height="0.8" fill="#c4cad4"/><rect x="690" y="77" width="10" height="1" fill="#a4acb8"/><rect x="690" y="78" width="10" height="0.8" fill="#c4cad4"/><rect x="716.0" y="77" width="7" height="1" fill="#a4acb8"/><rect x="716.0" y="78" width="7" height="0.8" fill="#c4cad4"/><rect x="739" y="77" width="10" height="1" fill="#a4acb8"/><rect x="739" y="78" width="10" height="0.8" fill="#c4cad4"/><rect x="690" y="79" width="13" height="1" fill="#a4acb8"/><rect x="690" y="80" width="13" height="0.8" fill="#c4cad4"/><rect x="714.0" y="79" width="11" height="1" fill="#a4acb8"/><rect x="714.0" y="80" width="11" height="0.8" fill="#c4cad4"/><rect x="736" y="79" width="13" height="1" fill="#a4acb8"/><rect x="736" y="80" width="13" height="0.8" fill="#c4cad4"/><rect x="690" y="81" width="10" height="1" fill="#a4acb8"/><rect x="690" y="82" width="10" height="0.8" fill="#c4cad4"/><rect x="716.0" y="81" width="7" height="1" fill="#a4acb8"/><rect x="716.0" y="82" width="7" height="0.8" fill="#c4cad4"/><rect x="739" y="81" width="10" height="1" fill="#a4acb8"/><rect x="739" y="82" width="10" height="0.8" fill="#c4cad4"/><rect x="690" y="83" width="13" height="1" fill="#a4acb8"/><rect x="690" y="84" width="13" height="0.8" fill="#c4cad4"/><rect x="714.0" y="83" width="11" height="1" fill="#a4acb8"/><rect x="714.0" y="84" width="11" height="0.8" fill="#c4cad4"/><rect x="736" y="83" width="13" height="1" fill="#a4acb8"/><rect x="736" y="84" width="13" height="0.8" fill="#c4cad4"/><rect x="690" y="85" width="10" height="1" fill="#a4acb8"/><rect x="690" y="86" width="10" height="0.8" fill="#c4cad4"/><rect x="716.0" y="85" width="7" height="1" fill="#a4acb8"/><rect x="716.0" y="86" width="7" height="0.8" fill="#c4cad4"/><rect x="739" y="85" width="10" height="1" fill="#a4acb8"/><rect x="739" y="86" width="10" height="0.8" fill="#c4cad4"/><rect x="690" y="87" width="13" height="1" fill="#a4acb8"/><rect x="690" y="88" width="13" height="0.8" fill="#c4cad4"/><rect x="714.0" y="87" width="11" height="1" fill="#a4acb8"/><rect x="714.0" y="88" width="11" height="0.8" fill="#c4cad4"/><rect x="736" y="87" width="13" height="1" fill="#a4acb8"/><rect x="736" y="88" width="13" height="0.8" fill="#c4cad4"/><path d="M765 88l11.5-11.5" stroke="#a4acb8" stroke-width="1.1"/><rect x="765.5" y="77.5" width="3" height="3" fill="none" stroke="#a4acb8" stroke-width="1.2"/><rect x="772.5" y="83.5" width="3" height="3" fill="none" stroke="#a4acb8" stroke-width="1.2"/><rect x="784" y="73" width="8" height="8" fill="#b4bcc8"/><path d="M788 74.5v5M785.5 77h5" stroke="#8892a0" stroke-width="1.8"/><text x="789.5" y="84" font-family="Liberation Sans" font-weight="bold" font-size="8.5" fill="#9ea6b2">.0</text><text x="786.5" y="91" font-family="Liberation Sans" font-weight="bold" font-size="8.5" fill="#9ea6b2">.00</text><rect x="807" y="73" width="8" height="8" fill="#b4bcc8"/><rect x="808" y="76" width="6" height="2.2" fill="#8892a0"/><text x="812.5" y="84" font-family="Liberation Sans" font-weight="bold" font-size="8.5" fill="#9ea6b2">.0</text><text x="809.5" y="91" font-family="Liberation Sans" font-weight="bold" font-size="8.5" fill="#9ea6b2">.00</text><rect x="835" y="73" width="8" height="8" fill="#b8c0ca"/><path d="M837.3 77.5v-1.8a1.7 1.7 0 0 1 3.4 0V77.5" stroke="#8c96a2" stroke-width="1.2" fill="none"/><rect x="836.3" y="77.3" width="5.4" height="3.6" fill="#8c96a2"/><rect x="837.5" y="80" width="2.5" height="9" fill="#a8b0bc"/><rect x="841" y="80" width="1.5" height="9" fill="#a8b0bc"/><rect x="844.5" y="76.5" width="2.5" height="12" fill="#d0d4dc" stroke="#a4acb8"/><rect x="848.5" y="76.5" width="2.5" height="12" fill="#d0d4dc" stroke="#a4acb8"/><path d="M871.5 78v-1.5h-9.5l4.8 5.5l-4.8 5.5h9.5V86" stroke="#a4acb8" stroke-width="1.5" fill="none"/><path d="M884 88.5l4.5-11" stroke="#a4acb8" stroke-width="1.5"/><path d="M884 88.5h4" stroke="#a4acb8" stroke-width="1.5"/></svg>
<div class="a" style="left:311px;top:95px;width:577px;height:29px;background:#f0f1f5"></div>
<div class="a" style="left:311px;top:124px;width:577px;height:1px;background:#d0d0d0"></div>
<div class="a" style="left:423px;top:96px;width:1px;height:27px;background:#c8c8c8"></div>
<div class="a" style="left:589px;top:96px;width:1px;height:27px;background:#c8c8c8"></div>
<div class="a" style="left:661px;top:96px;width:1px;height:27px;background:#c8c8c8"></div>
<div class="a" style="left:770px;top:96px;width:1px;height:27px;background:#c8c8c8"></div>
<div class="a" style="left:846px;top:96px;width:1px;height:27px;background:#c8c8c8"></div>
<div class="a" style="left:419px;top:120px;width:3px;height:3px;background:#000"></div>
<div class="a" style="left:585px;top:120px;width:3px;height:3px;background:#000"></div>
<div class="t" style="left:217px;width:300px;text-align:center;transform-origin:50% 0;top:97px;font-size:11px;font-weight:bold;color:#333;">Bestand</div>
<div class="t" style="left:356px;width:300px;text-align:center;transform-origin:50% 0;top:97px;font-size:11px;font-weight:bold;color:#333;">Anlage</div>
<div class="t" style="left:476px;width:300px;text-align:center;transform-origin:50% 0;top:97px;font-size:11px;font-weight:bold;color:#333;transform:scaleX(0.925);">WKN</div>
<div class="t" style="left:566px;width:300px;text-align:center;transform-origin:50% 0;top:97px;font-size:11px;font-weight:bold;color:#333;transform:scaleX(0.920);">ISIN/</div>
<div class="t" style="left:566px;width:300px;text-align:center;transform-origin:50% 0;top:111px;font-size:11px;font-weight:bold;color:#333;transform:scaleX(1.048);">Kontonummer</div>
<div class="t" style="left:658.5px;width:300px;text-align:center;transform-origin:50% 0;top:97px;font-size:11px;font-weight:bold;color:#333;transform:scaleX(1.049);">Anlage-</div>
<div class="t" style="left:658.5px;width:300px;text-align:center;transform-origin:50% 0;top:111px;font-size:11px;font-weight:bold;color:#333;transform:scaleX(1.058);">währung</div>
<div class="t" style="left:862px;top:97px;font-size:11px;font-weight:bold;color:#333;">Kaufkurs</div>
<div class="t" style="left:861px;top:111px;font-size:11px;font-weight:bold;color:#333;">[Anl.-Whg.]</div>
<div class="a" style="left:311px;top:125px;width:577px;height:367px;background:#fff"></div>
<div class="t" style="left:323px;top:128px;font-size:11px;font-weight:bold;color:#222;transform:scaleX(0.972);">2009-220301</div>
<div class="t" style="left:335px;top:144px;font-size:11px;font-weight:bold;color:#333;transform:scaleX(1.041);">Aktien</div>
<div class="t" style="left:335px;top:259px;font-size:11px;font-weight:bold;color:#333;transform:scaleX(1.033);">Renten</div>
<div class="t" style="left:335px;top:310px;font-size:11px;font-weight:bold;color:#333;transform:scaleX(1.020);">Liquidität</div>
<div class="t" style="right:470px;transform-origin:100% 0;top:160px;font-size:11px;font-weight:normal;color:#000;transform:scaleX(0.98);">125,00</div>
<div class="t" style="left:430px;top:160px;font-size:11px;font-weight:normal;color:#000;transform:scaleX(0.97);">Bayer NA</div>
<div class="t" style="left:597px;top:160px;font-size:11px;font-weight:normal;color:#000;transform:scaleX(0.975);">BAY001</div>
<div class="t" style="left:668px;top:160px;font-size:11px;font-weight:normal;color:#000;transform:scaleX(0.965);">DE000BAY0017</div>
<div class="t" style="left:777px;top:160px;font-size:11px;font-weight:normal;color:#000;transform:scaleX(0.98);">EUR</div>
<div class="t" style="right:470px;transform-origin:100% 0;top:176px;font-size:11px;font-weight:normal;color:#000;transform:scaleX(0.98);">230,00</div>
<div class="t" style="left:430px;top:176px;font-size:11px;font-weight:normal;color:#000;transform:scaleX(0.97);">BMW</div>
<div class="t" style="left:597px;top:176px;font-size:11px;font-weight:normal;color:#000;transform:scaleX(0.975);">519000</div>
<div class="t" style="left:668px;top:176px;font-size:11px;font-weight:normal;color:#000;transform:scaleX(0.965);">DE0005190003</div>
<div class="t" style="left:777px;top:176px;font-size:11px;font-weight:normal;color:#000;transform:scaleX(0.98);">EUR</div>
<div class="t" style="right:470px;transform-origin:100% 0;top:192px;font-size:11px;font-weight:normal;color:#000;transform:scaleX(0.98);">75,00</div>
<div class="t" style="left:430px;top:192px;font-size:11px;font-weight:normal;color:#000;transform:scaleX(0.97);">Puma</div>
<div class="t" style="left:597px;top:192px;font-size:11px;font-weight:normal;color:#000;transform:scaleX(0.975);">696960</div>
<div class="t" style="left:668px;top:192px;font-size:11px;font-weight:normal;color:#000;transform:scaleX(0.965);">DE0006969603</div>
<div class="t" style="left:777px;top:192px;font-size:11px;font-weight:normal;color:#000;transform:scaleX(0.98);">EUR</div>
<div class="t" style="right:470px;transform-origin:100% 0;top:208px;font-size:11px;font-weight:normal;color:#000;transform:scaleX(0.98);">500,00</div>
<div class="t" style="left:430px;top:208px;font-size:11px;font-weight:normal;color:#000;transform:scaleX(0.97);">SAP</div>
<div class="t" style="left:597px;top:208px;font-size:11px;font-weight:normal;color:#000;transform:scaleX(0.975);">716460</div>
<div class="t" style="left:668px;top:208px;font-size:11px;font-weight:normal;color:#000;transform:scaleX(0.965);">DE0007164600</div>
<div class="t" style="left:777px;top:208px;font-size:11px;font-weight:normal;color:#000;transform:scaleX(0.98);">EUR</div>
<div class="t" style="right:470px;transform-origin:100% 0;top:224px;font-size:11px;font-weight:normal;color:#000;transform:scaleX(0.98);">325,00</div>
<div class="t" style="left:430px;top:224px;font-size:11px;font-weight:normal;color:#000;transform:scaleX(0.97);">Stada-Arzneimittel</div>
<div class="t" style="left:597px;top:224px;font-size:11px;font-weight:normal;color:#000;transform:scaleX(0.975);">725180</div>
<div class="t" style="left:668px;top:224px;font-size:11px;font-weight:normal;color:#000;transform:scaleX(0.965);">DE0007251803</div>
<div class="t" style="left:777px;top:224px;font-size:11px;font-weight:normal;color:#000;transform:scaleX(0.98);">EUR</div>
<div class="t" style="right:470px;transform-origin:100% 0;top:275px;font-size:11px;font-weight:normal;color:#000;transform:scaleX(0.98);">16.000,00</div>
<div class="t" style="left:430px;top:275px;font-size:11px;font-weight:normal;color:#000;transform:scaleX(0.97);">5,625% Bundanl.V.98/01.28</div>
<div class="t" style="left:597px;top:275px;font-size:11px;font-weight:normal;color:#000;transform:scaleX(0.975);">113506</div>
<div class="t" style="left:668px;top:275px;font-size:11px;font-weight:normal;color:#000;transform:scaleX(0.965);">DE0001135069</div>
<div class="t" style="left:777px;top:275px;font-size:11px;font-weight:normal;color:#000;transform:scaleX(0.98);">EUR</div>
<div class="t" style="right:470px;transform-origin:100% 0;top:326px;font-size:11px;font-weight:normal;color:#000;transform:scaleX(0.98);">1,00</div>
<div class="t" style="left:430px;top:326px;font-size:11px;font-weight:normal;color:#000;transform:scaleX(0.97);">Konto: 2009-220301</div>
<div class="t" style="left:668px;top:326px;font-size:11px;font-weight:normal;color:#000;transform:scaleX(0.965);">803 502 12</div>
<div class="t" style="left:777px;top:326px;font-size:11px;font-weight:normal;color:#000;transform:scaleX(0.98);">EUR</div>
<div class="t" style="right:470px;transform-origin:100% 0;top:342px;font-size:11px;font-weight:normal;color:#000;transform:scaleX(0.98);">1,00</div>
<div class="t" style="left:430px;top:342px;font-size:11px;font-weight:normal;color:#000;transform:scaleX(0.97);">Konto: 2009-220301-USD</div>
<div class="t" style="left:668px;top:342px;font-size:11px;font-weight:normal;color:#000;transform:scaleX(0.965);">803 502 11</div>
<div class="t" style="left:777px;top:342px;font-size:11px;font-weight:normal;color:#000;transform:scaleX(0.98);">USD</div>
<div class="t" style="right:470px;transform-origin:100% 0;top:358px;font-size:11px;font-weight:normal;color:#000;transform:scaleX(0.98);">410,36</div>
<div class="t" style="left:430px;top:358px;font-size:11px;font-weight:normal;color:#000;transform:scaleX(0.97);">UnionGeldmarktFonds</div>
<div class="t" style="left:597px;top:358px;font-size:11px;font-weight:normal;color:#000;transform:scaleX(0.975);">975013</div>
<div class="t" style="left:668px;top:358px;font-size:11px;font-weight:normal;color:#000;transform:scaleX(0.965);">DE0009750133</div>
<div class="t" style="left:777px;top:358px;font-size:11px;font-weight:normal;color:#000;transform:scaleX(0.98);">EUR</div>
<div class="a" style="left:311px;top:492px;width:577px;height:16px;background:#f0f0f0"></div>
<div class="a" style="left:328px;top:492px;width:363px;height:15px;background:#cdcdcd"></div>
<svg class="a" style="left:315px;top:495px;" width="9" height="10" viewBox="0 0 9 10"><path d="M6.3 1.3L2.2 4.7L6.3 8.1" fill="none" stroke="#404040" stroke-width="1.9"/></svg>
<div class="a" style="left:311px;top:508px;width:577px;height:1px;background:#c0c0c4"></div>
<div class="a" style="left:311px;top:509px;width:577px;height:56px;background:#f0f1f5"></div>
<div class="a" style="left:311px;top:565px;width:577px;height:1px;background:#2c3e5e"></div>
<div class="a" style="left:317px;top:565px;width:43px;height:1px;background:#fbe8c8"></div>
<div class="t" style="left:324px;top:521px;font-size:11px;font-weight:bold;color:#222;transform:scaleX(1.085);">Vermögen</div>
<div class="t" style="left:324px;top:540px;font-size:11px;font-weight:bold;color:#222;transform:scaleX(1.031);">Liquidität</div>
<div class="t" style="right:415px;transform-origin:100% 0;top:522px;font-size:11px;font-weight:normal;color:#000;transform:scaleX(0.96);">423.915,48</div>
<div class="t" style="right:415px;transform-origin:100% 0;top:541px;font-size:11px;font-weight:normal;color:#000;transform:scaleX(0.96);">294.584,11</div>
<div class="t" style="left:494px;top:521px;font-size:11px;font-weight:bold;color:#222;transform:scaleX(1.014);">Eigenkapital</div>
<div class="t" style="left:494px;top:540px;font-size:11px;font-weight:bold;color:#222;transform:scaleX(1.048);">Festgeld</div>
<div class="t" style="right:237px;transform-origin:100% 0;top:522px;font-size:11px;font-weight:normal;color:#000;transform:scaleX(0.96);">349.750,80</div>
<div class="t" style="right:237px;transform-origin:100% 0;top:541px;font-size:11px;font-weight:normal;color:#000;transform:scaleX(0.96);">0</div>
<div class="t" style="left:672px;top:521px;font-size:11px;font-weight:bold;color:#222;transform:scaleX(1.024);">Erfolg, nicht real.</div>
<div class="t" style="left:672px;top:540px;font-size:11px;font-weight:bold;color:#222;transform:scaleX(1.018);">Erfolg [%], nicht real.</div>
<div class="t" style="right:20px;transform-origin:100% 0;top:522px;font-size:11px;font-weight:normal;color:#000;transform:scaleX(0.96);">42.934,66</div>
<div class="t" style="right:20px;transform-origin:100% 0;top:541px;font-size:11px;font-weight:normal;color:#000;transform:scaleX(0.96);">49,69%</div>
</body></html>
